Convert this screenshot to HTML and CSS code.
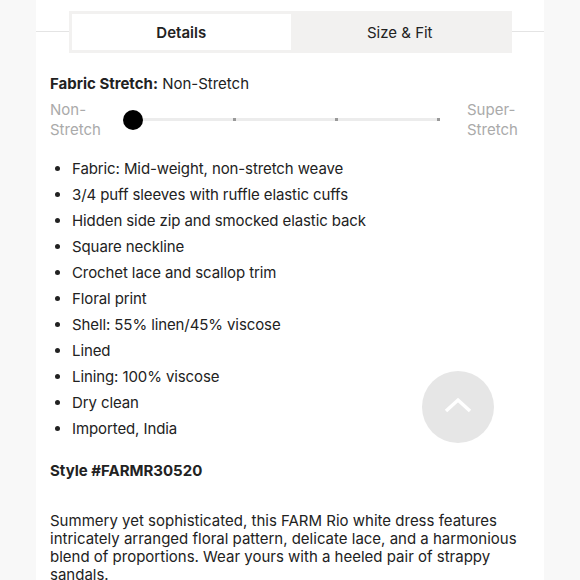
FILE: index.html
```html
<!DOCTYPE html>
<html lang="en">
<head>
  <meta charset="UTF-8" />
  <meta name="viewport" content="width=device-width, initial-scale=1.0" />
  <title>Details</title>
  <link rel="stylesheet" href="styles.css">
</head>
<body>
  <div class="panel">
    <div class="tab-row">
      <div class="tabs">
        <button class="tab active">Details</button>
        <button class="tab">Size &amp; Fit</button>
      </div>
    </div>

    <div class="content">
      <p class="stretch-title"><strong>Fabric Stretch:</strong> Non-Stretch</p>

      <div class="stretch-scale">
        <span class="scale-label">Non-<br>Stretch</span>
        <div class="track">
          <span class="knob"></span>
          <span class="tick"></span>
          <span class="tick"></span>
          <span class="tick"></span>
        </div>
        <span class="scale-label">Super-<br>Stretch</span>
      </div>

      <ul class="features">
        <li>Fabric: Mid-weight, non-stretch weave</li>
        <li>3/4 puff sleeves with ruffle elastic cuffs</li>
        <li>Hidden side zip and smocked elastic back</li>
        <li>Square neckline</li>
        <li>Crochet lace and scallop trim</li>
        <li>Floral print</li>
        <li>Shell: 55% linen/45% viscose</li>
        <li>Lined</li>
        <li>Lining: 100% viscose</li>
        <li>Dry clean</li>
        <li>Imported, India</li>
      </ul>

      <h4 class="style-no">Style #FARMR30520</h4>

      <p class="description">Summery yet sophisticated, this FARM Rio white dress features intricately arranged floral pattern, delicate lace, and a harmonious blend of proportions. Wear yours with a heeled pair of strappy sandals.</p>
    </div>

    <button class="to-top" aria-label="Back to top">
      <svg width="30" height="18" viewBox="0 0 30 18">
        <path d="M3 15 L15 4 L27 15" fill="none" stroke="#fff" stroke-width="3.5" />
      </svg>
    </button>
  </div>
</body>
</html>
```

FILE: styles.css
```css
body {
  margin: 0;
  font-family: Inter, "Liberation Sans", sans-serif;
  background-color: #f8f8f8;
  color: #222;
}

.panel {
  position: relative;
  width: 508px;
  height: 580px;
  overflow: hidden;
  margin-left: 36px;
  background-color: #fff;
  box-sizing: border-box;
}

.tab-row {
  display: flex;
  justify-content: center;
  padding: 11px 0 0 1px;
  background: linear-gradient(#e4e4e4, #e4e4e4) no-repeat 0 31px / 100% 1px;
}

.tabs {
  display: flex;
  width: 443px;
  padding: 3px;
  box-sizing: border-box;
  background-color: #f2f1f0;
}

.tab {
  flex: 1;
  height: 36px;
  border: none;
  background: transparent;
  font-family: inherit;
  font-size: 15px;
  color: #222;
  cursor: pointer;
}

.tab.active {
  background-color: #fff;
  font-weight: 600;
}

.content {
  padding: 0 14px;
}

.stretch-title {
  margin: 21px 0 0;
  font-size: 15px;
  line-height: 20px;
}

.stretch-title strong {
  font-weight: 700;
}

.stretch-scale {
  display: flex;
  align-items: center;
  margin-top: 6px;
}

.scale-label {
  width: 72px;
  font-size: 15px;
  line-height: 20px;
  color: #aaa;
}

.stretch-scale .scale-label:last-child {
  width: auto;
  margin-left: 28px;
}

.track {
  display: flex;
  justify-content: space-between;
  align-items: center;
  width: 306px;
  height: 3px;
  margin: -1px 0 0 11px;
  background-color: #ececec;
}

.knob {
  flex: none;
  width: 20px;
  height: 20px;
  margin: 0 -10px;
  border-radius: 50%;
  background-color: #000;
}

.tick {
  flex: none;
  width: 3px;
  height: 3px;
  margin: 0 -1px;
  background-color: #999;
}

.features {
  margin: 16px 0 0;
  padding: 0 0 0 22px;
  font-size: 15px;
  line-height: 26px;
  letter-spacing: -0.1px;
}

.style-no {
  margin: 16px 0 0;
  font-size: 15px;
  font-weight: 700;
  line-height: 26px;
}

.description {
  margin: 28px 0 0;
  font-size: 15px;
  line-height: 18px;
}

.to-top {
  position: absolute;
  left: 386px;
  top: 371px;
  width: 72px;
  height: 72px;
  border: none;
  border-radius: 50%;
  background-color: #e6e6e6;
  display: flex;
  align-items: center;
  justify-content: center;
  padding: 0 0 4px;
  cursor: pointer;
}
```
